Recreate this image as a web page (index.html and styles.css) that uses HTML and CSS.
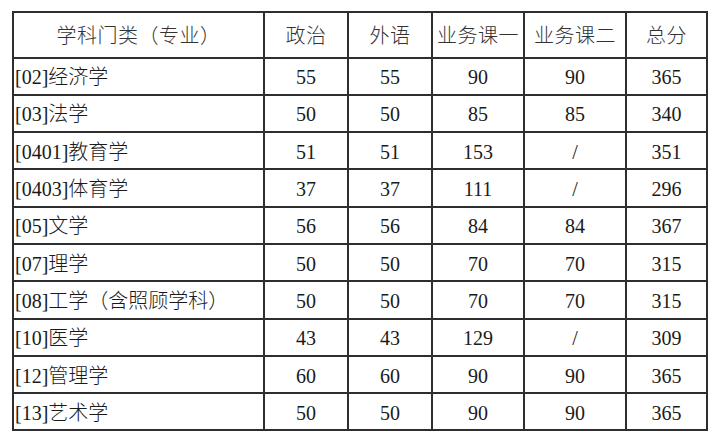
FILE: index.html
```html
<!DOCTYPE html>
<html lang="zh-CN">
<head>
<meta charset="utf-8">
<title>分数线</title>
<link rel="stylesheet" href="styles.css">
</head>
<body>
<table class="score-table">
  <colgroup>
    <col class="c-name"><col class="c-a"><col class="c-b"><col class="c-c"><col class="c-d"><col class="c-e">
  </colgroup>
  <thead>
    <tr class="head-row">
      <th>学科门类（专业）</th><th>政治</th><th>外语</th><th>业务课一</th><th>业务课二</th><th>总分</th>
    </tr>
  </thead>
  <tbody>
    <tr><td class="name">[02]经济学</td><td>55</td><td>55</td><td>90</td><td>90</td><td>365</td></tr>
    <tr><td class="name">[03]法学</td><td>50</td><td>50</td><td>85</td><td>85</td><td>340</td></tr>
    <tr><td class="name">[0401]教育学</td><td>51</td><td>51</td><td>153</td><td>/</td><td>351</td></tr>
    <tr><td class="name">[0403]体育学</td><td>37</td><td>37</td><td>111</td><td>/</td><td>296</td></tr>
    <tr><td class="name">[05]文学</td><td>56</td><td>56</td><td>84</td><td>84</td><td>367</td></tr>
    <tr><td class="name">[07]理学</td><td>50</td><td>50</td><td>70</td><td>70</td><td>315</td></tr>
    <tr><td class="name">[08]工学（含照顾学科）</td><td>50</td><td>50</td><td>70</td><td>70</td><td>315</td></tr>
    <tr><td class="name">[10]医学</td><td>43</td><td>43</td><td>129</td><td>/</td><td>309</td></tr>
    <tr><td class="name">[12]管理学</td><td>60</td><td>60</td><td>90</td><td>90</td><td>365</td></tr>
    <tr><td class="name">[13]艺术学</td><td>50</td><td>50</td><td>90</td><td>90</td><td>365</td></tr>
  </tbody>
</table>
</body>
</html>
```
FILE: styles.css
```css
html, body {
  margin: 0;
  padding: 0;
  background: #ffffff;
}
body {
  padding: 11px 0 0 12px;
  font-family: "Liberation Serif", "Noto Sans CJK SC", serif;
  font-size: 20px;
  color: #1a1a1a;
}
.score-table {
  border-collapse: collapse;
  table-layout: fixed;
  width: 694px;
}
.c-name { width: 251px; }
.c-a { width: 84px; }
.c-b { width: 84px; }
.c-c { width: 92px; }
.c-d { width: 102px; }
.c-e { width: 81px; }
.score-table th,
.score-table td {
  border: 2px solid #2e2e2e;
  padding: 2px 0 0 0;
  text-align: center;
  vertical-align: middle;
  font-weight: 300;
  line-height: 1.1;
  white-space: nowrap;
}
.score-table th {
  color: #333333;
  letter-spacing: 0.5px;
  padding-top: 3px;
}
.head-row { height: 45.5px; }
.score-table tbody tr { height: 37.3px; }
.score-table td.name {
  text-align: left;
  padding-left: 1px;
}
```
